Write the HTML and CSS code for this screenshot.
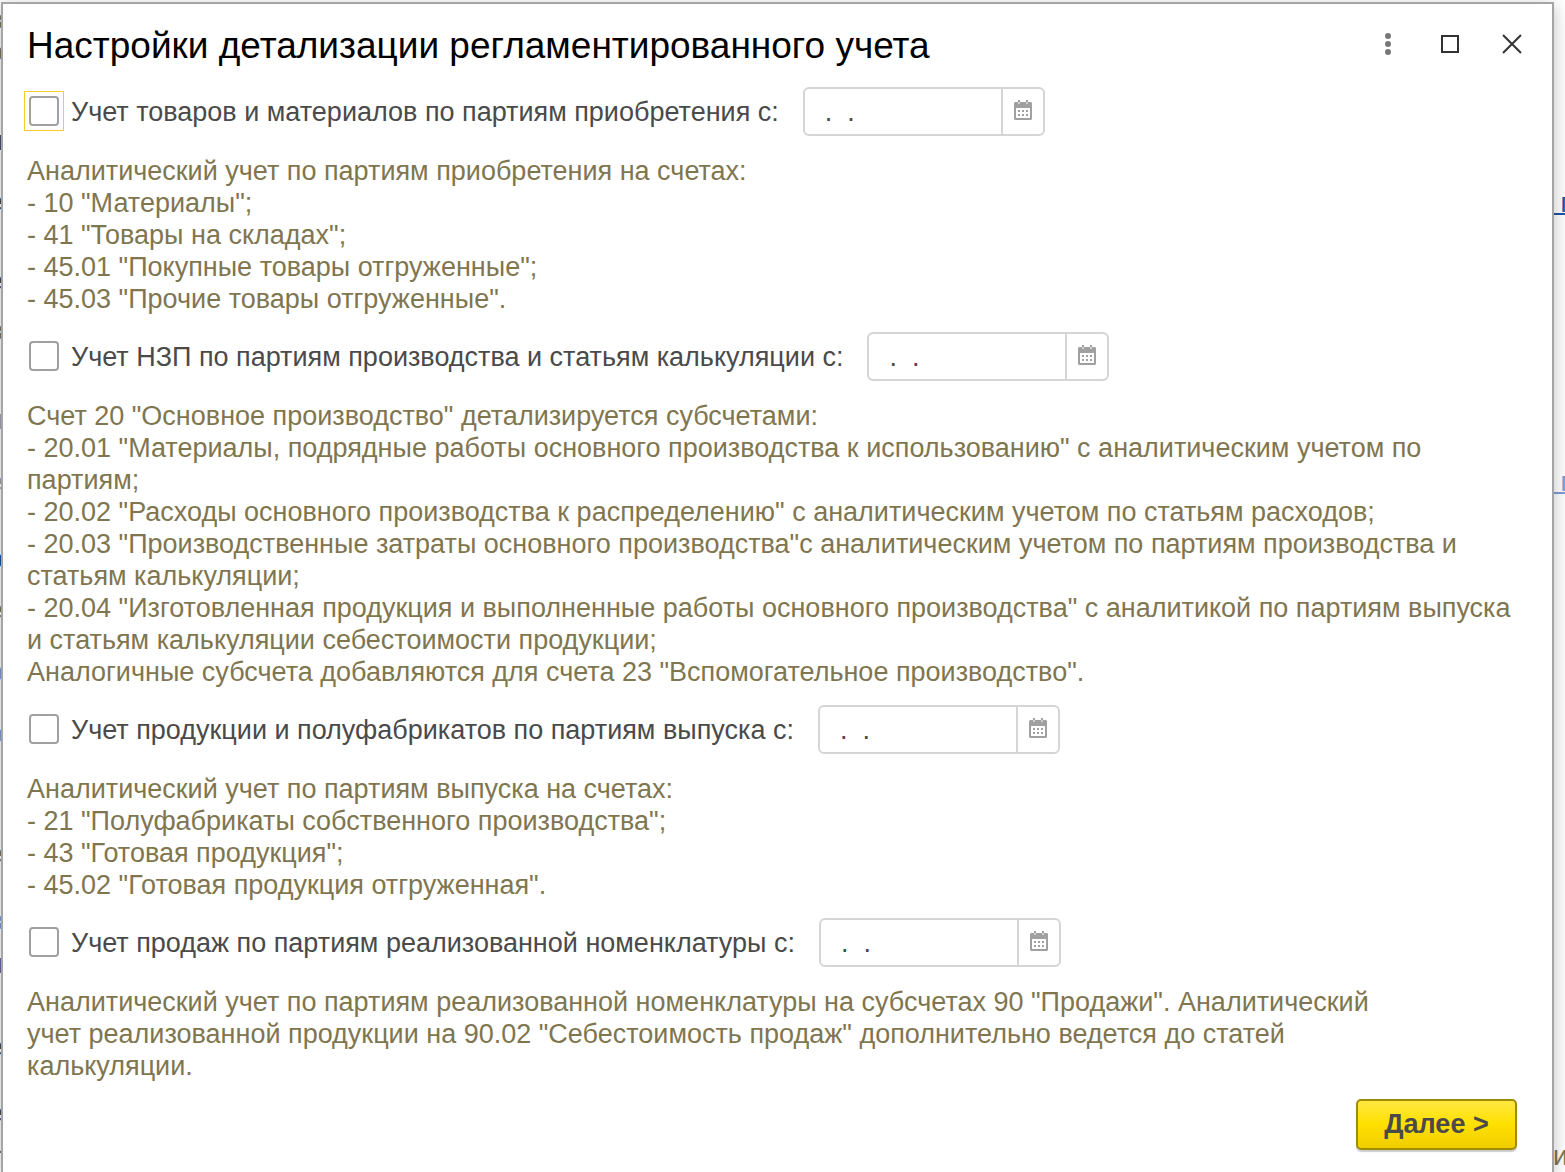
FILE: index.html
```html
<!DOCTYPE html>
<html lang="ru">
<head>
    <meta charset="UTF-8">
    <title>Настройки детализации регламентированного учета</title>
    <link rel="stylesheet" href="styles.css">
</head>
<body>
    <!-- form under the dialog, only its edges are visible -->
    <div class="backdrop" aria-hidden="true">
        <div class="edge-left">
            <span class="y1 olive">в</span>
            <span class="y2 olive">о</span>
            <span class="y3">н</span>
            <span class="y4">е</span>
            <span class="y5">е</span>
            <span class="y6 olive">в</span>
            <span class="y7 pale">н</span>
            <span class="y8 pale">е</span>
            <span class="y9 blue">о</span>
            <span class="y10 olive">е</span>
            <span class="y11 light">о</span>
            <span class="y12 light">о</span>
            <span class="y13 olive">е</span>
            <span class="y14 light">в</span>
            <span class="y15 violet">н</span>
            <span class="y16">е</span>
            <span class="y17">е</span>
            <span class="y18 olive">-</span>
        </div>
        <div class="edge-right">
            <a href="#" class="r1" tabindex="-1">&nbsp;п</a>
            <a href="#" class="r2 light" tabindex="-1">&nbsp;п</a>
            <span class="r3 olive">и</span>
        </div>
    </div>

    <svg class="sprite" width="0" height="0">
        <symbol id="calendar" viewBox="0 0 18 20">
            <path fill="#a0a0a0" fill-rule="evenodd" d="M1 2h16l1 1v16l-1 1H1l-1-1V3zM2 8v10h14V8z"/>
            <path fill="#d0d0d0" d="M4 2h2v2H4zM12 2h2v2h-2z"/>
            <path fill="#a0a0a0" d="M4 0h2v2H4zM12 0h2v2h-2zM4 10h2v2H4zM8 10h2v2H8zM12 10h2v2h-2zM4 14h2v2H4zM8 14h2v2H8zM12 14h2v2h-2z"/>
        </symbol>
    </svg>

    <main class="dialog">
        <header class="titlebar">
            <h1>Настройки детализации регламентированного учета</h1>
            <div class="window-buttons">
                <button type="button" aria-label="Меню">
                    <svg width="22" height="22" viewBox="0 0 22 22" fill="#777"><circle cx="11" cy="3" r="3"/><circle cx="11" cy="11" r="3"/><circle cx="11" cy="19" r="3"/></svg>
                </button>
                <button type="button" aria-label="Развернуть">
                    <svg width="22" height="22" viewBox="0 0 22 22" fill="none" stroke="#333" stroke-width="2"><path d="M3 3h16v16H3z"/></svg>
                </button>
                <button type="button" aria-label="Закрыть">
                    <svg width="22" height="22" viewBox="0 0 22 22" fill="none" stroke="#333" stroke-width="2"><path d="M2 2l18 18M20 2L2 20"/></svg>
                </button>
            </div>
        </header>

        <form>
            <div class="option current">
                <input type="checkbox" id="goods">
                <label for="goods">Учет товаров и материалов по партиям приобретения с:</label>
                <div class="date">
                    <input type="text" value=".  ." aria-label="Дата начала учета товаров">
                    <button type="button" aria-label="Выбрать дату"><svg width="18" height="20"><use href="#calendar"/></svg></button>
                </div>
            </div>
            <p class="hint">Аналитический учет по партиям приобретения на счетах:<br>
                - 10 "Материалы";<br>
                - 41 "Товары на складах";<br>
                - 45.01 "Покупные товары отгруженные";<br>
                - 45.03 "Прочие товары отгруженные".</p>

            <div class="option">
                <input type="checkbox" id="wip">
                <label for="wip">Учет НЗП по партиям производства и статьям калькуляции с:</label>
                <div class="date">
                    <input type="text" value=".  ." aria-label="Дата начала учета НЗП">
                    <button type="button" aria-label="Выбрать дату"><svg width="18" height="20"><use href="#calendar"/></svg></button>
                </div>
            </div>
            <p class="hint">Счет 20 "Основное производство" детализируется субсчетами:<br>
                - 20.01 "Материалы, подрядные работы основного производства к использованию" с аналитическим учетом по партиям;<br>
                - 20.02 "Расходы основного производства к распределению" с аналитическим учетом по статьям расходов;<br>
                - 20.03 "Производственные затраты основного производства"с аналитическим учетом по партиям производства и статьям калькуляции;<br>
                - 20.04 "Изготовленная продукция и выполненные работы основного производства" с аналитикой по партиям выпуска и статьям калькуляции себестоимости продукции;<br>
                Аналогичные субсчета добавляются для счета 23 "Вспомогательное производство".</p>

            <div class="option">
                <input type="checkbox" id="products">
                <label for="products">Учет продукции и полуфабрикатов по партиям выпуска с:</label>
                <div class="date">
                    <input type="text" value=".  ." aria-label="Дата начала учета продукции">
                    <button type="button" aria-label="Выбрать дату"><svg width="18" height="20"><use href="#calendar"/></svg></button>
                </div>
            </div>
            <p class="hint">Аналитический учет по партиям выпуска на счетах:<br>
                - 21 "Полуфабрикаты собственного производства";<br>
                - 43 "Готовая продукция";<br>
                - 45.02 "Готовая продукция отгруженная".</p>

            <div class="option">
                <input type="checkbox" id="sales">
                <label for="sales">Учет продаж по партиям реализованной номенклатуры с:</label>
                <div class="date">
                    <input type="text" value=".  ." aria-label="Дата начала учета продаж">
                    <button type="button" aria-label="Выбрать дату"><svg width="18" height="20"><use href="#calendar"/></svg></button>
                </div>
            </div>
            <p class="hint narrow">Аналитический учет по партиям реализованной номенклатуры на субсчетах 90 "Продажи". Аналитический учет реализованной продукции на 90.02 "Себестоимость продаж" дополнительно ведется до статей калькуляции.</p>

            <div class="footer">
                <button type="button" class="next">Далее &gt;</button>
            </div>
        </form>
    </main>
</body>
</html>
```
FILE: styles.css
```css
* {
    box-sizing: border-box;
}
body {
    margin: 0;
    min-height: 100vh;
    padding: 2px 11px 0 1px;
    display: flex;
    position: relative;
    overflow: hidden;
    background: #fff;
    font-family: "Liberation Sans", Arial, sans-serif;
    font-size: 27px;
    line-height: 32px;
    color: #4a4a4a;
}
button, input {
    font: inherit;
    color: inherit;
    margin: 0;
}
.sprite {
    position: absolute;
}

/* underlying form */
.backdrop {
    position: absolute;
    inset: 0;
    overflow: hidden;
}
.edge-left span {
    position: absolute;
    right: calc(100% - 3px);
}
.edge-right a, .edge-right span {
    position: absolute;
    left: calc(100% - 12px);
    padding-top: 8px;
    color: #1a54a8;
    text-decoration: none;
    line-height: 20px;
    border-bottom: 2px solid;
}
.edge-right span {
    border: none;
}
.y1 { top: 4px; }
.y2 { top: 36px; }
.y3 { top: 125px; }
.y4 { top: 186px; }
.y5 { top: 265px; }
.y6 { top: 315px; }
.y7 { top: 404px; }
.y8 { top: 466px; }
.y9 { top: 543px; }
.y10 { top: 594px; }
.y11 { top: 656px; }
.y12 { top: 718px; }
.y13 { top: 838px; }
.y14 { top: 905px; }
.y15 { top: 948px; }
.y16 { top: 1031px; }
.y17 { top: 1097px; }
.y18 { top: 1134px; }
.r1 { top: 185px; }
.r2 { top: 464px; }
.r3 { top: 1138px; }
.backdrop .olive { color: #7f7650; }
.backdrop .pale { color: #a0a0a0; }
.backdrop .light { color: #7f9cd6; }
.backdrop .blue { color: #1a54a8; }
.backdrop .violet { color: #6a6490; }

.dialog {
    position: relative;
    flex: 1;
    background: #fff;
    border: 2px solid #a5a5a5;
    border-bottom: none;
    box-shadow: 0 4px 16px rgba(0,0,0,0.25);
    padding: 0 35px 20px 24px;
}
.titlebar {
    display: flex;
    align-items: center;
    justify-content: space-between;
    height: 83px;
}
h1 {
    margin: 0;
    font-size: 37px;
    line-height: 44px;
    font-weight: normal;
    color: #000;
}
.window-buttons {
    display: flex;
    gap: 40px;
    margin-right: -6px;
    padding-bottom: 4px;
}
.window-buttons button {
    display: flex;
    padding: 0;
    border: none;
    background: none;
}
.option {
    display: flex;
    align-items: center;
    height: 49px;
}
.option input[type="checkbox"] {
    appearance: none;
    position: relative;
    width: 30px;
    height: 30px;
    margin: 0 12px 2px 2px;
    border: 2px solid #a0a0a0;
    border-radius: 4px;
    background: #fff;
}
/* focus frame */
.current input[type="checkbox"]::before {
    content: "";
    position: absolute;
    inset: -7px;
    border: 1px solid #f5cd28;
}
.date {
    display: flex;
    width: 242px;
    height: 49px;
    margin-left: 24px;
    border: 2px solid #d5d5d5;
    border-radius: 6px;
}
.date input {
    flex: 1;
    min-width: 0;
    padding: 0 0 0 20px;
    border: none;
    background: none;
    outline: none;
}
.date button {
    display: flex;
    align-items: center;
    justify-content: center;
    width: 42px;
    padding: 0 0 4px;
    border: none;
    border-left: 2px solid #d5d5d5;
    background: none;
}
.hint {
    margin: 19px 0 17px;
    color: #7f7650;
}
.narrow {
    max-width: 1400px;
}
.footer {
    display: flex;
    justify-content: flex-end;
}
.next {
    width: 161px;
    height: 51px;
    padding: 0 0 2px;
    border: 2px solid #a08c00;
    border-radius: 5px;
    background: linear-gradient(#ffe840, #ffe000 50%, #efcd00);
    box-shadow: 0 2px 1px rgba(0,0,0,0.2);
    font-weight: bold;
}
```
